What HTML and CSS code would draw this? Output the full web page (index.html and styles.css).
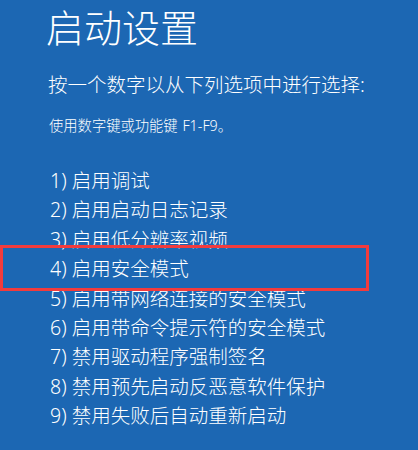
FILE: index.html
```html
<!DOCTYPE html>
<html lang="zh-CN">
<head>
<meta charset="utf-8">
<title>启动设置</title>
<link rel="stylesheet" href="styles.css">
</head>
<body>
<main class="screen">
  <h1 class="title">启动设置</h1>
  <p class="prompt">按一个数字以从下列选项中进行选择:</p>
  <p class="hint">使用数字键或功能键 F1-F9。</p>
  <ol class="options">
    <li>1) 启用调试</li>
    <li>2) 启用启动日志记录</li>
    <li>3) 启用低分辨率视频</li>
    <li>4) 启用安全模式</li>
    <li>5) 启用带网络连接的安全模式</li>
    <li>6) 启用带命令提示符的安全模式</li>
    <li>7) 禁用驱动程序强制签名</li>
    <li>8) 禁用预先启动反恶意软件保护</li>
    <li>9) 禁用失败后自动重新启动</li>
  </ol>
  <div class="highlight"></div>
</main>
</body>
</html>
```
FILE: styles.css
```css
html, body {
  margin: 0;
  padding: 0;
  background: #1c67b3;
}
.screen {
  position: relative;
  width: 418px;
  height: 450px;
  overflow: hidden;
  box-sizing: border-box;
  padding: 5px 0 0 48px;
  color: #ffffff;
  font-family: "Noto Sans", "Noto Sans CJK SC", sans-serif;
}
.title {
  margin: 0 0 0 -2px;
  font-size: 38px;
  line-height: 44px;
  font-weight: 300;
}
.prompt {
  margin: 22px 0 0 0;
  font-size: 19.5px;
  line-height: 28px;
  font-weight: 300;
}
.hint {
  margin: 17px 0 0 1px;
  font-size: 14.3px;
  line-height: 20px;
  font-weight: 300;
  word-spacing: 1px;
}
.options {
  list-style: none;
  margin: 30px 0 0 2px;
  padding: 0;
  font-size: 19.5px;
  line-height: 29.4px;
  font-weight: 300;
}
.highlight {
  position: absolute;
  left: 0;
  top: 245px;
  width: 369px;
  height: 46px;
  box-sizing: border-box;
  border: 3px solid #f23b3d;
}
```
